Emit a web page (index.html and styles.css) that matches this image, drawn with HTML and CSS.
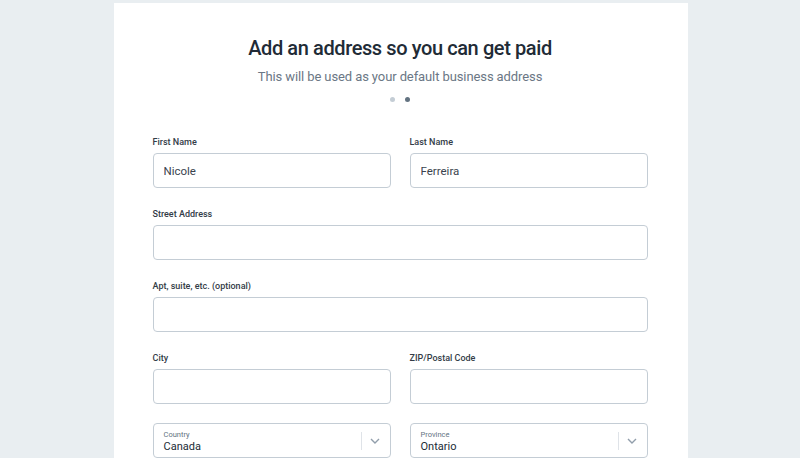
FILE: index.html
```html
<!DOCTYPE html>
<html lang="en">
<head>
    <meta charset="UTF-8">
    <title>Add an address</title>
    <link rel="stylesheet" href="styles.css">
</head>
<body>
    <div class="card">
        <h1>Add an address so you can get paid</h1>
        <p class="subtitle">This will be used as your default business address</p>
        <div class="dots"><span class="dot"></span><span class="dot active"></span></div>

        <form class="form">
            <div class="row two">
                <div class="field">
                    <label for="first">First Name</label>
                    <input type="text" id="first" value="Nicole">
                </div>
                <div class="field">
                    <label for="last">Last Name</label>
                    <input type="text" id="last" value="Ferreira">
                </div>
            </div>
            <div class="row">
                <div class="field">
                    <label for="street">Street Address</label>
                    <input type="text" id="street">
                </div>
            </div>
            <div class="row">
                <div class="field">
                    <label for="apt">Apt, suite, etc. (optional)</label>
                    <input type="text" id="apt">
                </div>
            </div>
            <div class="row two">
                <div class="field">
                    <label for="city">City</label>
                    <input type="text" id="city">
                </div>
                <div class="field">
                    <label for="zip">ZIP/Postal Code</label>
                    <input type="text" id="zip">
                </div>
            </div>
            <div class="row two selects">
                <div class="select">
                    <div class="select-text">
                        <span class="select-label">Country</span>
                        <span class="select-value">Canada</span>
                    </div>
                    <span class="select-arrow">
                        <svg width="10" height="6" viewBox="0 0 10 6"><path d="M1 1l4 4 4-4" fill="none" stroke="#919eab" stroke-width="1.4"/></svg>
                    </span>
                </div>
                <div class="select">
                    <div class="select-text">
                        <span class="select-label">Province</span>
                        <span class="select-value">Ontario</span>
                    </div>
                    <span class="select-arrow">
                        <svg width="10" height="6" viewBox="0 0 10 6"><path d="M1 1l4 4 4-4" fill="none" stroke="#919eab" stroke-width="1.4"/></svg>
                    </span>
                </div>
            </div>
        </form>
    </div>
</body>
</html>
```

FILE: styles.css
```css
* { margin: 0; padding: 0; box-sizing: border-box; }
body { font-family: Roboto, "Liberation Sans", sans-serif; background-color: #e9eef1; height: 458px; overflow: hidden; padding-left: 1px; }
.card { width: 574px; margin: 3px auto 0; background-color: #fff; padding: 33px 40px 0 39px; min-height: 470px; text-align: center; }
h1 { font-size: 20px; line-height: 24px; font-weight: 500; color: #212b36; letter-spacing: -0.4px; }
.subtitle { margin-top: 7px; font-size: 13px; line-height: 20px; color: #6b7785; letter-spacing: -0.1px; }
.dots { margin-top: 10px; height: 6px; display: flex; justify-content: center; gap: 10px; }
.dot { width: 5px; height: 5px; border-radius: 50%; background-color: #c4cdd5; }
.dot.active { background-color: #637381; }

.form { margin-top: 33px; text-align: left; }
.row { display: flex; gap: 19px; margin-bottom: 20px; }
.row .field, .row .select { flex: 1; }
.field label { display: block; font-size: 9px; line-height: 12px; font-weight: 500; color: #333c47; margin-bottom: 5px; }
.field input { width: 100%; height: 35px; border: 1px solid #c4cdd5; border-radius: 4px; padding: 0 10px; font-family: inherit; font-size: 11.5px; color: #3a434e; outline: none; }
.selects { margin-top: -1px; }
.select { height: 35px; border: 1px solid #c4cdd5; border-radius: 4px; display: flex; align-items: center; padding-left: 10px; }
.select-text { flex: 1; display: flex; flex-direction: column; padding-top: 3px; }
.select-label { font-size: 7.5px; line-height: 10px; color: #637381; }
.select-value { font-size: 11px; line-height: 14px; color: #212b36; }
.select-arrow { width: 28px; height: 18px; border-left: 1px solid #dfe3e8; display: flex; align-items: center; justify-content: center; margin-right: 1px; }
```
